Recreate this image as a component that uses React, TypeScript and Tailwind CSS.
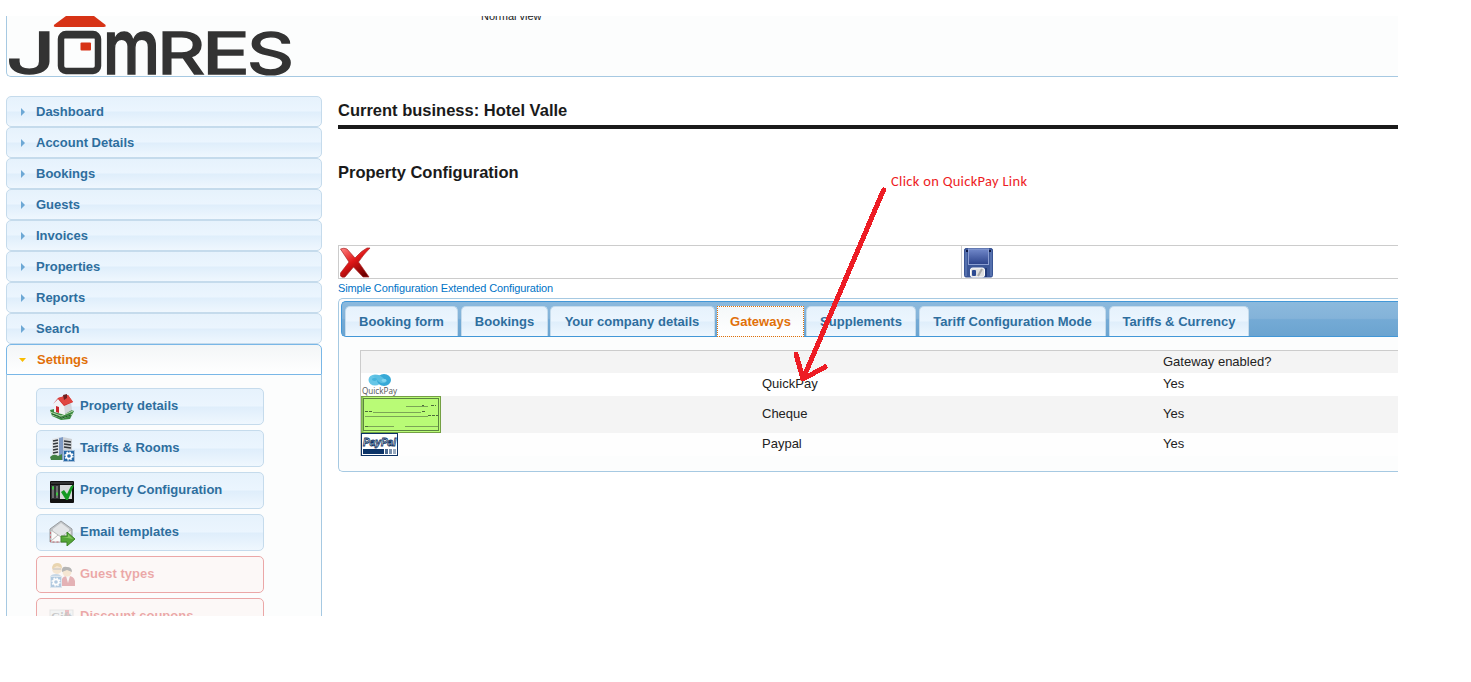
import React from "react";

const menuItems = ["Dashboard", "Account Details", "Bookings", "Guests", "Invoices", "Properties", "Reports", "Search"];

const glossy = "bg-[linear-gradient(to_bottom,#e6f2fc_0%,#ebf5fe_48%,#dfeefb_52%,#eff7fe_100%)]";

function Logo() {
  return (
    <svg className="block h-[60px] w-[290px]" viewBox="7 16 290 60">
      <path d="M66 16H94L105 24.5Q107 27 103.500 27H56Q52.500 27 54.500 24.500Z" fill="#d73316" />
      <rect x="61" y="34" width="37" height="37" rx="5" fill="#fcfdfd" stroke="#333" strokeWidth="6.500" />
      <rect x="62" y="32" width="35" height="6.500" fill="#333" />
      <rect x="80.500" y="42.500" width="10.500" height="8" rx="1" fill="#d73316" />
      <g fill="#333" stroke="#333" strokeWidth="1.600" fontFamily="Inter, sans-serif" fontWeight="400" fontSize="57">
        <text x="6" y="73.500" textLength="50" lengthAdjust="spacingAndGlyphs">J</text>
        <text x="103" y="73.500" textLength="57" lengthAdjust="spacingAndGlyphs" fontSize="75" fontWeight="500">m</text>
        <text x="157" y="73.500" textLength="48" lengthAdjust="spacingAndGlyphs">R</text>
        <text x="202" y="73.500" textLength="48" lengthAdjust="spacingAndGlyphs">E</text>
        <text x="247" y="73.500" textLength="47" lengthAdjust="spacingAndGlyphs">S</text>
      </g>
    </svg>
  );
}

function HouseIcon() {
  return (
    <svg className="size-[26px]" viewBox="0 0 26 26">
      <path d="M1 16L14 13L25 17L21 25L12 26L3 22Z" fill="#3c8a40" />
      <path d="M1 18L12 22L24 17M3 21L14 24L24 20" stroke="#b9d8b0" fill="none" />
      <path d="M3 20L13 24L22 21" stroke="#215c2a" fill="none" />
      <path d="M5 9L9 6L16 12V21L5 18Z" fill="#f1f2f5" />
      <path d="M15 11L22 8L23 16L16 20Z" fill="#d3d6dc" />
      <path d="M4 10L9 4L19 1L24 8L15 12L9 5Z" fill="#d22c2a" />
      <path d="M9 4L19 1L24 8L15 11Z" fill="#e04640" />
      <path d="M14 1L18 0V4L15 6Z" fill="#6d2020" />
      <path d="M7 12L10 13V19L7 18Z" fill="#c9252b" />
    </svg>
  );
}

function BuildingIcon() {
  return (
    <svg className="size-[26px]" viewBox="0 0 26 26">
      <path d="M3 3L11 1V24L3 22Z" fill="#e2e5e9" />
      <path d="M10 2L14 1V24H10Z" fill="#7f9bc5" />
      <path d="M14 1L23 3V22L14 24Z" fill="#ced2d6" />
      <path d="M4 5L9 4M4 8L9 7M4 11L9 10M4 14L9 13M4 17L9 16M15 5L22 6M15 8L22 9M15 11L22 12" stroke="#33383d" strokeWidth="1.700" />
      <path d="M1 21Q5 17 9 20L13 18V24H2Z" fill="#438244" />
      <SettingsBadge />
    </svg>
  );
}

function SettingsBadge({ x = 14, y = 14 }: { x?: number; y?: number }) {
  return (
    <g transform={`translate(${x} ${y})`}>
      <rect x=".5" y=".5" width="11" height="11" fill="#276aa9" stroke="#a7bfd8" />
      <circle cx="6" cy="6" r="2.600" fill="none" stroke="white" strokeWidth="1.600" />
      <circle cx="6" cy="6" r="3.900" fill="none" stroke="white" strokeWidth="1.300" strokeDasharray="1.500 1.560" />
    </g>
  );
}

function ConfigIcon() {
  return (
    <svg className="size-[26px]" viewBox="0 0 26 26">
      <rect x="1" y="3" width="24" height="22" rx="1" fill="#111" />
      <path d="M2 5H24" stroke="#555" />
      <rect x="2" y="7" width="9" height="14" fill="#303334" />
      <rect x="11" y="7" width="12" height="14" fill="#d7d9da" />
      <path d="M4 8V20M8 8V20" stroke="#aaa" strokeWidth="1" />
      <path d="M3 10H5M7 16H9" stroke="#40c443" strokeWidth="3" />
      <path d="M12 14L15 12L18 16L22 8L25 7L19 22H17Z" fill="#159a23" />
    </svg>
  );
}

function MailIcon() {
  return (
    <svg className="size-[26px]" viewBox="0 0 26 26">
      <path d="M1 9L12 1L23 9V22H1Z" fill="#c2c5c8" stroke="#989ca0" />
      <path d="M4 9L12 3L20 9V13L12 18L4 13Z" fill="#e3e5e7" />
      <path d="M2 10L12 17L22 10V22H2Z" fill="#fafafa" stroke="#bbb" />
      <path d="M2 21L9 15M22 21L15 15" stroke="#bbb" />
      <path d="M1.500 12V22H11" fill="none" stroke="#c76f78" strokeDasharray="2 2" />
      <path d="M12 16H18V12L26 19L18 26V22H12Z" fill="#55a637" stroke="#3e8429" />
      <path d="M13 17H19V14L24 19Z" fill="#84c65f" />
    </svg>
  );
}

function GuestsIcon() {
  return (
    <svg className="size-[26px]" viewBox="0 0 26 26">
      <path d="M1 22V15Q2 12 7 12Q12 12 13 16V24H1Z" fill="#6994bd" />
      <circle cx="8" cy="7" r="5" fill="#eabd85" />
      <path d="M3 7Q3 1 8 1Q13 1 13 6L8 4Z" fill="#c88c24" />
      <path d="M4 7H12" stroke="#555" />
      <path d="M13 24V17Q14 14 19 14Q25 14 26 19V24Z" fill="#b82832" />
      <path d="M17 14H21L19 21Z" fill="#eee" />
      <circle cx="18" cy="10" r="4.500" fill="#eabd85" />
      <path d="M13 10Q12 4 18 5Q23 5 23 10L18 8Z" fill="#333" />
      <SettingsBadge x={1} y={14} />
    </svg>
  );
}

function GiftIcon() {
  return (
    <svg className="size-[26px]" viewBox="0 0 26 26">
      <rect x="1" y="6" width="23" height="17" fill="#e2e4e5" stroke="#bbb" />
      <path d="M18 6V23" stroke="#cf4d56" strokeWidth="4" />
      <text x="2" y="17" fontFamily="Liberation Serif, serif" fontSize="12" fill="#666">Gift</text>
    </svg>
  );
}

const tools = [
  { label: "Property details", icon: <HouseIcon />, off: false },
  { label: "Tariffs & Rooms", icon: <BuildingIcon />, off: false },
  { label: "Property Configuration", icon: <ConfigIcon />, off: false },
  { label: "Email templates", icon: <MailIcon />, off: false },
  { label: "Guest types", icon: <GuestsIcon />, off: true },
  { label: "Discount coupons", icon: <GiftIcon />, off: true },
];

function Sidebar() {
  return (
    <nav className="flex w-[316px] shrink-0 flex-col text-[13px] font-bold">
      {menuItems.map((item) => (
        <div key={item} className={`flex h-[31px] shrink-0 items-center rounded-[5px] border border-[#c5dbec] pl-[14px] text-[#2e6e9e] ${glossy}`}>
          <svg className="mt-px mr-[11px] h-2 w-1" viewBox="0 0 4 8"><path d="M0 0L4 4L0 8Z" fill="#6da8d5" /></svg>
          {item}
        </div>
      ))}
      <div className="flex h-[31px] shrink-0 items-center rounded-t-[5px] border border-[#79b7e7] bg-[linear-gradient(to_bottom,#f3f6f7,#fff)] pl-3 text-[#e17009]">
        <svg className="mr-[11px] h-1 w-[7px]" viewBox="0 0 7 4"><path d="M0 0H7L3.500 4Z" fill="#f9bd01" /></svg>
        Settings
      </div>
      <div className="flex flex-1 flex-col gap-[5px] border-x border-[#a6c9e2] bg-[#fcfdfd] pt-[13px] pl-[29px]">
        {tools.map((tool) => (
          <div key={tool.label} className={tool.off
            ? "flex h-[37px] w-[228px] shrink-0 items-center rounded-[5px] border border-[#cd0a0a] bg-[#fef1ec] pl-3 text-[#cd0a0a] opacity-35"
            : `flex h-[37px] w-[228px] shrink-0 items-center rounded-[5px] border border-[#c5dbec] pl-3 text-[#2e6e9e] ${glossy}`}>
            {tool.icon}
            <span className="mb-px ml-[5px]">{tool.label}</span>
          </div>
        ))}
      </div>
    </nav>
  );
}

function CancelIcon() {
  return (
    <svg className="h-8 w-8" viewBox="0 0 32 32">
      <defs><linearGradient id="cancel" x1="0" y1="0" x2=".7" y2="1"><stop stopColor="#ff8585" /><stop offset=".5" stopColor="#df1717" /><stop offset="1" stopColor="#6e0000" /></linearGradient></defs>
      <path d="M1.500 3Q5 1.500 8 3L16 12Q22 5 28 2H31Q24 9 19.500 16L30 31H24L14.500 21L6 31Q3 32 1.500 30V27L10 16Z" fill="url(#cancel)" stroke="#a92525" strokeWidth=".7" />
    </svg>
  );
}

function SaveIcon() {
  return (
    <svg className="ml-[2px] h-8 w-[30px]" viewBox="0 0 30 32">
      <defs><linearGradient id="disk" x1="0" y1="0" x2="0" y2="1"><stop stopColor="#7188ca" /><stop offset="1" stopColor="#2b428a" /></linearGradient></defs>
      <rect x=".5" y="2.500" width="28" height="28.500" rx="1.500" fill="#3c5798" stroke="#3a5594" />
      <path d="M2 4V30M27 4V30" stroke="#6f8bc4" />
      <rect x="4.500" y="3" width="20" height="15.500" fill="url(#disk)" stroke="#8c9fd2" />
      <path d="M2 5H4M25 5H27" stroke="#101b45" strokeWidth="2" />
      <rect x="6.500" y="22" width="14" height="9" rx="2" fill="#dfdfdf" stroke="#fff" />
      <rect x="8" y="24" width="4" height="6" rx="1" fill="#2c4a91" />
      <path d="M14 30L18 23" stroke="#aaa" strokeWidth="2" />
      <path d="M22 22V31" stroke="#223a78" strokeWidth="2" />
    </svg>
  );
}

function QuickPayLogo() {
  return (
    <svg className="block h-[23px] w-[38px]" viewBox="0 0 38 23">
      <ellipse cx="14" cy="7" rx="6.500" ry="5.500" fill="#66c6e7" />
      <ellipse cx="23" cy="7" rx="7" ry="6" fill="#36a9d7" />
      <path d="M12 3Q17 0 21 4L26 8Q23 12 18 9Z" fill="#5bbfe2" />
      <ellipse cx="13.500" cy="6.500" rx="2.500" ry="1.400" fill="#45b4dc" />
      <ellipse cx="23" cy="7.500" rx="2.500" ry="1.400" fill="#81d5ef" />
      <text x="1" y="20.500" textLength="35" lengthAdjust="spacingAndGlyphs" fontFamily="Open Sans, sans-serif" fontSize="8.500" fill="#555">QuickPay</text>
    </svg>
  );
}

function ChequeImage() {
  return (
    <svg className="block h-[37px] w-20" viewBox="0 0 80 37">
      <rect x=".5" y=".5" width="79" height="36" fill="#b9fb76" stroke="#74a044" />
      <path d="M1.500 1V36" stroke="#8dc55b" strokeWidth="2" />
      <rect x="2.500" y="2.500" width="75" height="32" fill="none" stroke="#5c8540" />
      <path d="M45 10.500H67M12 16.500H60M4 20.500H67M7 30.500H33M44 30.500H77" stroke="#7ba556" />
      <path d="M70 9.500H75M61 9.500H63M4 15.500H12M61 15.500H64M67 19.500H77M4 30.500H7" stroke="#4c6a3a" strokeDasharray="3 1" />
    </svg>
  );
}

function PaypalImage() {
  return (
    <svg className="block h-[23px] w-[37px]" viewBox="0 0 37 23">
      <rect x=".5" y=".5" width="36" height="22" fill="#fff" stroke="#0c3265" />
      <text x="2" y="12.500" textLength="33" lengthAdjust="spacingAndGlyphs" fontFamily="Liberation Sans, sans-serif" fontStyle="italic" fontWeight="700" fontSize="11" fill="#fff" stroke="#123767" strokeWidth=".9">PayPal</text>
      <path d="M2 18.500H23" stroke="#0b3367" strokeWidth="5" />
      <path d="M24 18.500H27" stroke="#4a698f" strokeWidth="5" />
      <path d="M28 18.500H31" stroke="#7890ad" strokeWidth="5" />
      <path d="M32 18.500H35" stroke="#9aabc0" strokeWidth="5" />
    </svg>
  );
}

const tabs = [
  { label: "Booking form", box: "w-[113px] mr-[3px]" },
  { label: "Bookings", box: "w-[87px] mr-[2px]" },
  { label: "Your company details", box: "w-[165px] mr-[2px] pr-px" },
  { label: "Gateways", box: "w-[87px] mr-[2px]" },
  { label: "Supplements", box: "w-[110px] mr-[3px]" },
  { label: "Tariff Configuration Mode", box: "w-[187px] mr-[3px]" },
  { label: "Tariffs & Currency", box: "w-[140px]" },
];

function GatewayTable() {
  const grid = "grid grid-cols-[401px_401px_1fr] items-center";
  const cell = "pb-[2px]";
  return (
    <div className="ml-[21px] h-[106px] border-t border-l border-[#ccc] text-[13px] text-[#222]">
      <div className={`${grid} h-[22px] bg-[#f4f4f4]`}><span /><span /><span>Gateway enabled?</span></div>
      <div className={`${grid} h-[23px] bg-white`}><QuickPayLogo /><span className={cell}>QuickPay</span><span className={cell}>Yes</span></div>
      <div className={`${grid} h-[37px] bg-[#f4f4f4]`}><ChequeImage /><span className={cell}>Cheque</span><span className={cell}>Yes</span></div>
      <div className={`${grid} h-[23px] bg-[#fefefe]`}><PaypalImage /><span className={cell}>Paypal</span><span className={cell}>Yes</span></div>
    </div>
  );
}

export default function App() {
  return (
    <div className="h-[682px] overflow-hidden bg-white pt-4 font-['Liberation_Sans',Arial,sans-serif] text-[#1a1a1a]">
      <div className="flex h-[600px] w-[1398px] flex-col overflow-hidden pl-[6px]">
        <header className="flex h-[61px] shrink-0 overflow-hidden rounded-bl-[5px] border-b border-l border-[#a6c9e2] bg-[#fcfdfd]">
          <Logo />
          <span className="-mt-[7px] ml-[184px] text-[11px] leading-[14px]">Normal view</span>
        </header>

        <div className="flex min-h-0 flex-1 gap-4 pt-[19px]">
          <Sidebar />
          <main className="min-w-0 flex-1">
            <h1 className="h-[33px] border-b-4 border-[#1a1a1a] pt-[5px] text-[16.5px] leading-[18px] font-bold">Current business: Hotel Valle</h1>
            <h2 className="mt-[34px] text-[16.5px] leading-[18px] font-bold">Property Configuration</h2>
            <div className="mt-[64px] flex h-[34px] border-y border-l border-[#ccc]">
              <div className="w-[622px]"><CancelIcon /></div>
              <div className="flex-1 border-l border-[#ccc]"><SaveIcon /></div>
            </div>
            <div className="flex h-[19px] gap-[3px] pt-[2px] text-[11px] leading-[14px] tracking-[-0.12px] text-[#0073c6]"><a>Simple Configuration</a><a>Extended Configuration</a></div>
            <section className="h-[174px] rounded-l-[5px] border-y border-l border-[#a6c9e2] bg-[#fcfdfd] pt-[2px]">
              <div className="ml-[2px] flex h-9 items-end rounded-l-[5px] border-y border-l border-[#4297d7] bg-[linear-gradient(to_bottom,#8bb9dd_0%,#84b3d9_48%,#74aad5_52%,#6ba4d0_100%)] pl-[3px] text-[13px] font-bold tracking-[0.03px]">
                {tabs.map((tab) => (
                  <div key={tab.label} className={tab.label === "Gateways"
                    ? `${tab.box} relative -mb-px flex h-[31px] items-center justify-center border border-dotted border-[#e17009] bg-[linear-gradient(to_bottom,#f5f8f9,#fff)] text-[#e17009]`
                    : `${tab.box} flex h-[30px] items-center justify-center rounded-t-[5px] border-x border-t border-[#c5dbec] text-[#2e6e9e] ${glossy}`}>
                    {tab.label}
                  </div>
                ))}
              </div>
              <div className="h-[13px]" />
              <GatewayTable />
            </section>
          </main>
        </div>
      </div>
      <svg className="pointer-events-none absolute top-[180px] left-[780px] h-[210px] w-[120px]" viewBox="780 180 120 210">
        <path d="M883.500 190L803 379M796 354L803 379L825 367" fill="none" stroke="#ed1c24" strokeWidth="5" strokeLinecap="round" strokeLinejoin="round" shapeRendering="crispEdges" />
      </svg>
      <span className="absolute top-[173px] left-[891px] font-['Carlito',Lato,sans-serif] text-[14.5px] leading-4 tracking-[0.3px] text-[#ed1c24]">Click on QuickPay Link</span>
    </div>
  );
}
